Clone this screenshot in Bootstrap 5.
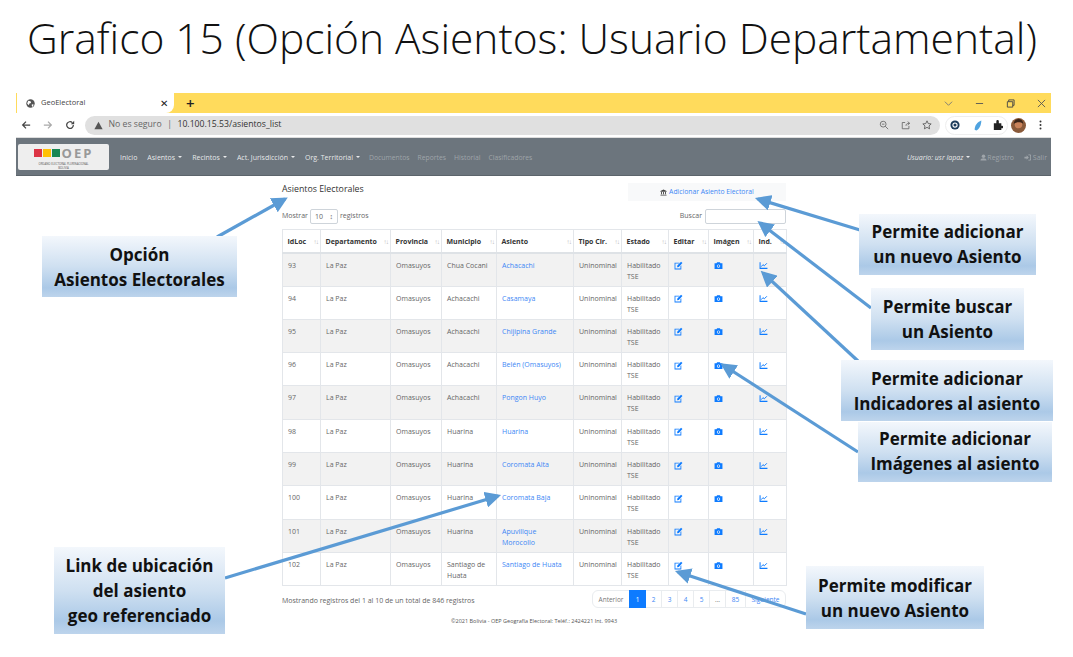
<!DOCTYPE html>
<html lang="es">
  <head>
    <meta charset="UTF-8" />
    <title>Grafico 15</title>
    <link href="https://cdn.jsdelivr.net/npm/bootstrap@5.3.0/dist/css/bootstrap.min.css" rel="stylesheet" />
    <style>
      body { margin: 0; width: 1073px; height: 657px; overflow: hidden; background: #fff; font-family: "Open Sans", sans-serif; color: #666; }
      .slide { position: relative; width: 1073px; height: 657px; }
      .slide-title { height: 93px; margin: 0; padding: 11px 9px 0 0; text-align: center; font: 300 42.500px/54px "Open Sans", sans-serif; color: #111; white-space: nowrap; }
      .shot { margin: 0 22px 0 16px; }

      .tabstrip { height: 20px; background: #ffdb5c; }
      .tab-item { width: 158px; height: 20px; background: #fff; font-size: 7.5px; color: #444; padding-left: 9px; gap: 6px; border-radius: 0 0 8px 0; border-left: 1px solid #ffdb5c; }
      .tab-close { margin-left: auto; margin-right: 6px; font-size: 10px; color: #222; }
      .tab-plus { margin-left: 12px; font-size: 15px; line-height: 20px; color: #222; font-weight: 600; }
      .win-btns { margin-left: auto; gap: 22px; padding-right: 5px; }
      .toolbar { height: 25px; background: #fff; padding: 0 5px; border-bottom: 1px solid #ddd; }
      .nav-ico { gap: 12px; width: 64px; flex: none; }
      .omnibox { flex: none; width: 855px; height: 19px; background: #e0e0e0; border-radius: 10px; padding: 0 8px 0 9px; font-size: 8.7px; color: #666; gap: 5.500px; }
      .omnibox b { font-weight: 400; color: #333; }
      .omni-tools { gap: 11.500px; }
      .ext-group { flex: none; width: 63px; height: 19px; margin-left: 5px; border: 1px solid #eee; border-radius: 10px; padding-left: 4px; }
      .ext-a { margin-right: 13px; }
      .ext-b { margin-right: 10px; }
      .ext-face { margin-left: 3px; margin-right: 13px; flex: none; }

      .oep-nav { --bs-navbar-nav-link-padding-x: 4px; height: 38px; background: #6c757d; border-bottom: 1px solid #5c646b; padding: 0 0 0 2px; }
      .oep-nav .navbar-nav { margin-top: 3px; }
      .oep-logo { width: 91px; height: 26px; background: #eeeeee; border-radius: 2px; flex-direction: column; align-items: center; margin-right: 7px; }
      .oep-mark { gap: 1px; height: 14px; margin-top: 2px; }
      .oep-mark i { width: 8px; height: 8px; display: block; }
      .oep-mark span { font: 700 13px/14px "Open Sans", sans-serif; letter-spacing: 2px; color: #999; margin-left: 1px; }
      .oep-sub { font-size: 2.800px; line-height: 4px; margin-top: 2px; color: #555; text-align: center; }
      .oep-nav .nav-link { font-size: 7px; color: rgba(255,255,255,.85); white-space: nowrap; }
      .oep-nav .nav-link.disabled { color: rgba(255,255,255,.35); }
      .oep-nav .nav-item { margin-right: 2px; }
      .oep-nav .left-nav .nav-link.disabled { font-size: 6.800px; padding-left: 3px; padding-right: 3px; }
      .oep-nav .dropdown-toggle::after { margin-left: 3px; }
      .user-link { font-style: italic; }

      .content { width: 504px; margin-left: 266px; color: #666; font-size: 7px; }
      .head-row { height: 33px; padding-top: 7px; }
      .head-row h6 { font-size: 8.800px; font-weight: 400; color: #333; margin: 1px 0 0; }
      .add-box { width: 158px; height: 18px; background: #f8f9fa; text-align: center; line-height: 17px; font-size: 6.800px; }
      .add-box a, .data-grid a { color: #3d87f5; text-decoration: none; }
      .filter-row { height: 20px; font-size: 7px; }
      .len-select { width: 28px; height: 15px; border: 1px solid #ced4da; border-radius: 2px; margin: 0 2px; padding-left: 4px; font-size: 7px; line-height: 14px; justify-content: space-between; padding-right: 4px; }
      .find-input { width: 81px; height: 15px; border: 1px solid #ced4da; border-radius: 2px; margin-left: 3px; }

      .data-grid { table-layout: fixed; width: 504px; margin: 0; font-size: 7px; line-height: 11px; color: #666; --bs-table-bg: transparent; }
      .data-grid th, .data-grid td { padding: 6px 6px 4px 5px; vertical-align: top; border: 1px solid #e3e6ea; }
      .data-grid thead th { color: #333; font-weight: 700; height: 23px; border-bottom: 2px solid #dee2e6; padding: 6px 0 0 4.500px; position: relative; white-space: nowrap; }
      .data-grid tbody tr:nth-child(odd) td { background: #f2f2f2; }
      .data-grid tbody td { height: 33.300px; }
      .sort-mark { position: absolute; right: 2px; top: 6px; color: #bbb; font-size: 6.500px; font-weight: 400; letter-spacing: -1px; }
      .c1 { width: 38px; } .c2 { width: 70px; } .c3 { width: 51px; } .c4 { width: 55px; } .c5 { width: 77px; }
      .c6 { width: 48px; } .c7 { width: 47px; } .c8 { width: 40px; } .c9 { width: 45px; } .c10 { width: 33px; }

      .foot-row { height: 26px; padding-top: 4px; }
      .foot-info { margin-top: 6px; }
      .pager { margin: 0; font-size: 6.500px; }
      .pager .page-link { padding: 0; height: 18px; line-height: 17px; text-align: center; font-size: 6.500px; border-color: #e9ecef; color: #3d87f5; min-width: 17px; }
      .pager .page-item.active .page-link { background: #0d7bff; border-color: #0d7bff; color: #fff; }
      .pager .page-item.disabled .page-link { color: #777; background: #fff; }
      .pg-wide { width: 38px; } .pg-next { width: 41px; } .pg-mid { width: 21px; }
      .copy-line { text-align: center; font-size: 5.500px; color: #555; margin-top: 5px; }

      .callout { position: absolute; display: flex; align-items: center; justify-content: center; text-align: center; font: 700 17px/25px "Open Sans", sans-serif; color: #111; background: linear-gradient(#f3f7fc 0%, #cfe0f1 50%, #abc9e7 85%, #bdd4ec 100%); }
      .co-a { left: 42px; top: 236px; width: 195px; height: 61px; }
      .co-b { left: 859px; top: 214px; width: 177px; height: 61px; padding-bottom: 2px; }
      .co-c { left: 871px; top: 288px; width: 153px; height: 62px; }
      .co-d { left: 841px; top: 360px; width: 212px; height: 61px; }
      .co-e { left: 858px; top: 422px; width: 194px; height: 60px; padding-bottom: 2px; }
      .co-f { left: 54px; top: 547px; width: 171px; height: 87px; }
      .co-g { left: 806px; top: 566px; width: 178px; height: 63px; }
      .arrows { position: absolute; left: 0; top: 0; pointer-events: none; }
      .arrows line { stroke: #5b9bd5; stroke-width: 3.200; }
    </style>
  </head>
  <body>
    <svg width="0" height="0" class="position-absolute">
      <symbol id="i-edit" viewBox="0 0 16 16"><path fill="#0d7bff" d="M1 3h9L8.500 4.500H2.500v9h9V9L13 7.500V15H1z"/><path fill="#0d7bff" d="M6 8l6.500-6.500 2.500 2L8.500 10.500l-3 .5z"/></symbol>
      <symbol id="i-cam" viewBox="0 0 16 16"><path fill="#0d7bff" fill-rule="evenodd" d="M1 4h3.500l1-2h5l1 2H15v10H1zM8 6a3 3 0 1 0 0 6a3 3 0 0 0 0-6z"/><circle cx="8" cy="9" r="1.700" fill="#0d7bff"/></symbol>
      <symbol id="i-chart" viewBox="0 0 16 16"><path fill="#0d7bff" d="M1 2h1.800v10.200H15V14H1z"/><path fill="none" stroke="#0d7bff" stroke-width="1.700" d="M4 10l3-3.500 2.500 2L14 4"/></symbol>
      <symbol id="i-bank" viewBox="0 0 16 16"><path fill="#444" d="M8 1l7 3.500V6H1V4.500zM2.500 7h2v5h-2zM7 7h2v5H7zM11.500 7h2v5h-2zM1 13h14v2H1z"/></symbol>
      <symbol id="i-user" viewBox="0 0 16 16"><circle cx="8" cy="5" r="4" fill="currentColor"/><path fill="currentColor" d="M1 15c0-4 3-5.500 7-5.500s7 1.500 7 5.500z"/></symbol>
      <symbol id="i-exit" viewBox="0 0 16 16"><path fill="currentColor" d="M1 6h5V3l5 5-5 5v-3H1z"/><path fill="none" stroke="currentColor" stroke-width="2" d="M10 2h5v12h-5"/></symbol>
    </svg>

    <div class="slide">
      <h1 class="slide-title">Grafico 15 (Opción Asientos: Usuario Departamental)</h1>

      <div class="shot">
        <div class="tabstrip d-flex align-items-center">
          <div class="tab-item d-flex align-items-center">
            <svg width="9" height="9" viewBox="0 0 16 16"><circle cx="8" cy="8" r="7.500" fill="#555"/><path fill="#fff" d="M4 3l4 1 1 3-3 1-1 3-3-3zM10 10l3-1 0 3-2 2z"/></svg>
            GeoElectoral
            <span class="tab-close">&#10005;</span>
          </div>
          <span class="tab-plus">+</span>
          <div class="win-btns d-flex align-items-center">
            <svg width="9" height="9" viewBox="0 0 10 10"><path fill="none" stroke="#777" d="M1 3l4 4 4-4"/></svg>
            <svg width="9" height="9" viewBox="0 0 10 10"><path stroke="#555" d="M1 5h8"/></svg>
            <svg width="9" height="9" viewBox="0 0 10 10"><path fill="none" stroke="#444" d="M1.500 3h6v6h-6zM3 3V1h6v6H7.500"/></svg>
            <svg width="9" height="9" viewBox="0 0 10 10"><path stroke="#555" d="M1 1l8 8M9 1l-8 8"/></svg>
          </div>
        </div>
        <div class="toolbar d-flex align-items-center">
          <div class="nav-ico d-flex align-items-center">
            <svg width="10" height="10" viewBox="0 0 12 12"><path fill="none" stroke="#444" stroke-width="1.500" d="M11 6H2M6 2L2 6l4 4"/></svg>
            <svg width="10" height="10" viewBox="0 0 12 12"><path fill="none" stroke="#aaa" stroke-width="1.500" d="M1 6h9M6 2l4 4-4 4"/></svg>
            <svg width="10" height="10" viewBox="0 0 12 12"><path fill="none" stroke="#444" stroke-width="1.500" d="M10 6a4 4 0 1 1-1.200-2.800"/><path fill="#444" d="M11 1v4H7z"/></svg>
          </div>
          <div class="omnibox d-flex align-items-center">
            <svg width="9" height="9" viewBox="0 0 12 12"><path fill="#555" d="M6 1l5.500 10H.5z"/></svg>
            <span>No es seguro</span><span>|</span><b>10.100.15.53/asientos_list</b>
            <div class="omni-tools ms-auto d-flex align-items-center">
              <svg width="10" height="10" viewBox="0 0 12 12"><circle cx="5" cy="5" r="3.500" fill="none" stroke="#666"/><path stroke="#666" d="M7.500 7.500L11 11M3.500 5h3"/></svg>
              <svg width="10" height="10" viewBox="0 0 12 12"><path fill="none" stroke="#666" d="M5 3H1.500v7.500h8V7M6 7c0-2 1-3 4-3M8 2l2.500 2L8 6"/></svg>
              <svg width="10" height="10" viewBox="0 0 12 12"><path fill="none" stroke="#555" d="M6 1l1.500 3.300 3.500.4-2.600 2.400.7 3.500L6 8.800l-3.100 1.800.7-3.500L1 4.700l3.500-.4z"/></svg>
            </div>
          </div>
          <div class="ext-group d-flex align-items-center">
            <svg class="ext-a" width="10" height="10" viewBox="0 0 12 12"><circle cx="6" cy="6" r="5.500" fill="#1d3c5a"/><circle cx="6" cy="6" r="2.500" fill="none" stroke="#fff" stroke-width="1.300"/></svg>
            <svg class="ext-b" width="10" height="11" viewBox="0 0 12 12"><path fill="#4fa3e0" d="M10 0C5 2 2 6 2 11l2 1c3-1 6-6 6-12z"/></svg>
            <svg width="10" height="10" viewBox="0 0 12 12"><path fill="#222" d="M1 4h3V1.500a1.500 1.500 0 0 1 3 0V4h3v3h1a1.500 1.500 0 0 1 0 3h-1v2H1z"/></svg>
          </div>
          <svg class="ext-face" width="15" height="15" viewBox="0 0 16 16"><circle cx="8" cy="8" r="8" fill="#8a5a3a"/><circle cx="8" cy="7" r="4" fill="#c9825a"/><path fill="#3a2418" d="M3 6a5 5 0 0 1 10 0c-3-2-7-2-10 0z"/></svg>
          <svg width="3" height="10" viewBox="0 0 3 10"><circle cx="1.500" cy="1.500" r="1" fill="#333"/><circle cx="1.500" cy="5" r="1" fill="#333"/><circle cx="1.500" cy="8.500" r="1" fill="#333"/></svg>
        </div>

        <nav class="navbar navbar-expand oep-nav">
          <div class="oep-logo d-flex">
            <div class="oep-mark d-flex align-items-center">
              <i class="bg-danger"></i><i class="bg-warning"></i><i class="bg-success"></i><span>OEP</span>
            </div>
            <div class="oep-sub">ORGANO ELECTORAL PLURINACIONAL<br />BOLIVIA</div>
          </div>
          <ul class="navbar-nav left-nav">
            <li class="nav-item"><a class="nav-link" href="#">Inicio</a></li>
            <li class="nav-item"><a class="nav-link dropdown-toggle" href="#">Asientos</a></li>
            <li class="nav-item"><a class="nav-link dropdown-toggle" href="#">Recintos</a></li>
            <li class="nav-item"><a class="nav-link dropdown-toggle" href="#">Act. Jurisdicción</a></li>
            <li class="nav-item"><a class="nav-link dropdown-toggle" href="#">Org. Territorial</a></li>
            <li class="nav-item"><a class="nav-link disabled" href="#">Documentos</a></li>
            <li class="nav-item"><a class="nav-link disabled" href="#">Reportes</a></li>
            <li class="nav-item"><a class="nav-link disabled" href="#">Historial</a></li>
            <li class="nav-item"><a class="nav-link disabled" href="#">Clasificadores</a></li>
          </ul>
          <ul class="navbar-nav ms-auto">
            <li class="nav-item"><a class="nav-link dropdown-toggle user-link" href="#">Usuario: usr lapaz</a></li>
            <li class="nav-item"><a class="nav-link disabled" href="#"><svg width="7" height="7"><use href="#i-user" /></svg>Registro</a></li>
            <li class="nav-item me-0"><a class="nav-link disabled" href="#"><svg width="7" height="7"><use href="#i-exit" /></svg> Salir</a></li>
          </ul>
        </nav>

        <div class="content">
          <div class="head-row d-flex justify-content-between align-items-start">
            <h6>Asientos Electorales</h6>
            <div class="add-box"><svg width="7" height="7"><use href="#i-bank" /></svg> <a href="#">Adicionar Asiento Electoral</a></div>
          </div>
          <div class="filter-row d-flex align-items-start justify-content-between">
            <div class="d-flex align-items-center">Mostrar <span class="len-select d-flex"><span>10</span><span>&#8597;</span></span> registros</div>
            <div class="d-flex align-items-center">Buscar <span class="find-input"></span></div>
          </div>
          <table class="table data-grid">
            <thead>
              <tr>
                <th class="c1">IdLoc <span class="sort-mark">↑↓</span></th>
                <th class="c2">Departamento <span class="sort-mark">↑↓</span></th>
                <th class="c3">Provincia <span class="sort-mark">↑↓</span></th>
                <th class="c4">Municipio <span class="sort-mark">↑↓</span></th>
                <th class="c5">Asiento <span class="sort-mark">↑↓</span></th>
                <th class="c6">Tipo Cir. <span class="sort-mark">↑↓</span></th>
                <th class="c7">Estado <span class="sort-mark">↑↓</span></th>
                <th class="c8">Editar <span class="sort-mark">↑↓</span></th>
                <th class="c9">Imágen <span class="sort-mark">↑↓</span></th>
                <th class="c10">Ind. <span class="sort-mark">↑↓</span></th>
              </tr>
            </thead>
            <tbody id="rows"></tbody>
          </table>
          <div class="foot-row d-flex justify-content-between align-items-start">
            <div class="foot-info">Mostrando registros del 1 al 10 de un total de 846 registros</div>
            <ul class="pagination pager">
              <li class="page-item disabled"><a class="page-link pg-wide" href="#">Anterior</a></li>
              <li class="page-item active"><a class="page-link" href="#">1</a></li>
              <li class="page-item"><a class="page-link" href="#">2</a></li>
              <li class="page-item"><a class="page-link" href="#">3</a></li>
              <li class="page-item"><a class="page-link" href="#">4</a></li>
              <li class="page-item"><a class="page-link" href="#">5</a></li>
              <li class="page-item disabled"><a class="page-link" href="#">...</a></li>
              <li class="page-item"><a class="page-link pg-mid" href="#">85</a></li>
              <li class="page-item"><a class="page-link pg-next" href="#">Siguiente</a></li>
            </ul>
          </div>
          <div class="copy-line">©2021 Bolivia - OEP Geografía Electoral: Teléf.: 2424221 Int. 9943</div>
        </div>
      </div>

      <svg class="arrows" width="1073" height="657" viewBox="0 0 1073 657">
        <defs>
          <marker id="tip" markerWidth="5" markerHeight="5" refX="4" refY="2.500" orient="auto"><path d="M0 0L5 2.500L0 5z" fill="#5b9bd5" /></marker>
        </defs>
        <line x1="217" y1="237" x2="285" y2="199" marker-end="url(#tip)" />
        <line x1="860" y1="230" x2="758" y2="199" marker-end="url(#tip)" />
        <line x1="871" y1="308" x2="760" y2="223" marker-end="url(#tip)" />
        <line x1="858" y1="361" x2="763" y2="273" marker-end="url(#tip)" />
        <line x1="858" y1="452" x2="723" y2="365" marker-end="url(#tip)" />
        <line x1="225" y1="578" x2="498" y2="496" marker-end="url(#tip)" />
        <line x1="806" y1="614" x2="678" y2="572" marker-end="url(#tip)" />
      </svg>

      <div class="callout co-a">Opción<br />Asientos Electorales</div>
      <div class="callout co-b">Permite adicionar<br />un nuevo Asiento</div>
      <div class="callout co-c">Permite buscar<br />un Asiento</div>
      <div class="callout co-d">Permite adicionar<br />Indicadores al asiento</div>
      <div class="callout co-e">Permite adicionar<br />Imágenes al asiento</div>
      <div class="callout co-f">Link de ubicación<br />del asiento<br />geo referenciado</div>
      <div class="callout co-g">Permite modificar<br />un nuevo Asiento</div>
    </div>

    <script>
      const asientos = [
        [93, "Chua Cocani", "Achacachi"],
        [94, "Achacachi", "Casamaya"],
        [95, "Achacachi", "Chijipina Grande"],
        [96, "Achacachi", "Belén (Omasuyos)"],
        [97, "Achacachi", "Pongon Huyo"],
        [98, "Huarina", "Huarina"],
        [99, "Huarina", "Coromata Alta"],
        [100, "Huarina", "Coromata Baja"],
        [101, "Huarina", "Apuvillque Morocollo"],
        [102, "Santiago de Huata", "Santiago de Huata"],
      ];
      const icon = (name) => `<a href="#"><svg width="9" height="9"><use href="#${name}" /></svg></a>`;
      document.getElementById("rows").innerHTML = asientos
        .map(
          (a) => `<tr>
            <td>${a[0]}</td><td>La Paz</td><td>Omasuyos</td><td>${a[1]}</td>
            <td><a href="#">${a[2]}</a></td><td>Uninominal</td><td>Habilitado TSE</td>
            <td>${icon("i-edit")}</td><td>${icon("i-cam")}</td><td>${icon("i-chart")}</td>
          </tr>`
        )
        .join("");
    </script>
    <script src="https://cdn.jsdelivr.net/npm/bootstrap@5.3.0/dist/js/bootstrap.bundle.min.js"></script>
  </body>
</html>
